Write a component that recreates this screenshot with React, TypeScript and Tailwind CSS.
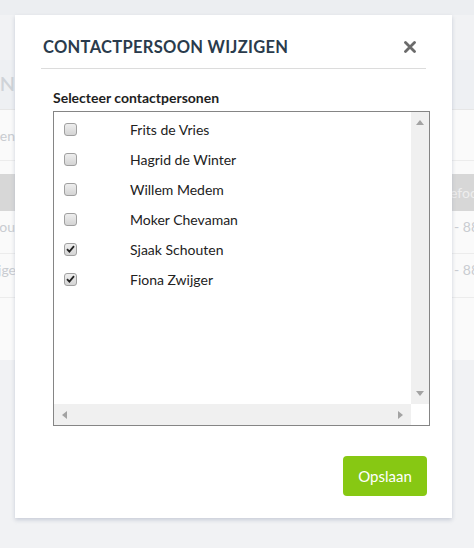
import React from "react";

const people = [
  { name: "Frits de Vries", checked: false },
  { name: "Hagrid de Winter", checked: false },
  { name: "Willem Medem", checked: false },
  { name: "Moker Chevaman", checked: false },
  { name: "Sjaak Schouten", checked: true },
  { name: "Fiona Zwijger", checked: true },
];

function Checkbox({ checked }: { checked: boolean }) {
  return (
    <div className="w-[13px] h-[13px] rounded-[3px] border border-[#a0a0a0] bg-gradient-to-b from-[#eeeeee] to-[#d4d4d4] flex items-center justify-center">
      {checked && (
        <svg width="9" height="8" viewBox="0 0 9 8">
          <path d="M1 4.2 L3.4 6.6 L8 1.2" fill="none" stroke="#222" strokeWidth="1.8" />
        </svg>
      )}
    </div>
  );
}

function Background() {
  return (
    <div className="w-[474px] h-[548px] bg-[#f1f2f4] pt-[60px] text-[#c9ccd1]" style={{ fontFamily: "Lato, 'Open Sans', sans-serif" }}>
      <div className="bg-[#fafafa] h-[300px]">
        <div className="h-[50px] bg-[#eef0f3] flex items-start pt-[8px] border-b border-[#e6e6e6]">
          <div className="w-[15px] overflow-hidden flex justify-end">
            <span className="whitespace-nowrap text-[20px] font-semibold text-[#cfd3d8]">WIJZIGEN</span>
          </div>
        </div>
        <div className="h-[51px] flex items-center border-b border-[#ececec]">
          <div className="w-[15px] overflow-hidden flex justify-end">
            <span className="whitespace-nowrap text-[14px]">Contactpersonen</span>
          </div>
        </div>
        <div className="h-[13px]" />
        <div className="h-[37px] bg-[#d7d7d7] flex items-center justify-between text-[#eeeeee] text-[14px]">
          <span />
          <div className="w-[24px] overflow-hidden">
            <span className="whitespace-nowrap">efoon</span>
          </div>
        </div>
        <div className="h-[43px] flex items-center justify-between border-b border-[#ececec] text-[14px] pb-[12px]">
          <div className="w-[15px] overflow-hidden flex justify-end">
            <span className="whitespace-nowrap">Schou</span>
          </div>
          <div className="w-[20px] overflow-hidden">
            <span className="whitespace-nowrap">- 88</span>
          </div>
        </div>
        <div className="h-[44px] flex items-center justify-between border-b border-[#ececec] text-[14px] pb-[12px]">
          <div className="w-[16px] overflow-hidden flex justify-end">
            <span className="whitespace-nowrap">Zwijge</span>
          </div>
          <div className="w-[20px] overflow-hidden">
            <span className="whitespace-nowrap">- 88</span>
          </div>
        </div>
      </div>
    </div>
  );
}

export default function App() {
  return (
    <div className="relative w-[474px] h-[548px] overflow-hidden">
      <div className="absolute inset-x-0 top-0 h-[15px] bg-[#eceef1]" />
      <Background />
      <div
        className="absolute left-[15px] top-[15px] w-[437px] h-[503px] bg-white shadow-[0_2px_4px_rgba(150,160,180,0.45)] flex flex-col"
        style={{ fontFamily: "Lato, 'Open Sans', sans-serif" }}
      >
        <div className="mx-[26px] pt-[20px] pb-[9px] border-b border-[#dcdcdc] flex items-center justify-between">
          <h2 className="ml-[2px] text-[16.5px] leading-[24px] font-bold tracking-[0.3px] text-[#2a3b4c]">
            CONTACTPERSOON WIJZIGEN
          </h2>
          <svg width="12" height="12" viewBox="0 0 12 12" className="mr-[10px]">
            <path d="M1.5 1.5 L10.5 10.5 M10.5 1.5 L1.5 10.5" stroke="#6b6b6b" strokeWidth="2.8" strokeLinecap="round" />
          </svg>
        </div>
        <div className="pl-[38px] pr-[22px] pt-[19px] flex flex-col">
          <label className="text-[14px] leading-[20px] font-bold text-[#1e1e1e]">Selecteer contactpersonen</label>
          <div className="mt-[3px] h-[315px] border border-[#858585] flex flex-col">
            <div className="flex-1 flex">
              <div className="flex-1 pt-[2px]">
                {people.map((p) => (
                  <div key={p.name} className="h-[30px] flex items-center pl-[10px]">
                    <Checkbox checked={p.checked} />
                    <span className="ml-[53px] text-[14px] text-[#222]">{p.name}</span>
                  </div>
                ))}
              </div>
              <div className="w-[18px] bg-[#f0f0f0] flex flex-col justify-between items-center py-[8px]">
                <svg width="8" height="5" viewBox="0 0 8 5">
                  <path d="M0 5 L4 0 L8 5 Z" fill="#a3a3a3" />
                </svg>
                <svg width="8" height="5" viewBox="0 0 8 5">
                  <path d="M0 0 L4 5 L8 0 Z" fill="#a3a3a3" />
                </svg>
              </div>
            </div>
            <div className="h-[21px] flex">
              <div className="flex-1 bg-[#f0f0f0] flex items-center justify-between px-[8px]">
                <svg width="5" height="8" viewBox="0 0 5 8">
                  <path d="M5 0 L0 4 L5 8 Z" fill="#a3a3a3" />
                </svg>
                <svg width="5" height="8" viewBox="0 0 5 8">
                  <path d="M0 0 L5 4 L0 8 Z" fill="#a3a3a3" />
                </svg>
              </div>
              <div className="w-[18px] bg-white" />
            </div>
          </div>
          <div className="flex justify-end mt-[30px] pr-[3px]">
            <button className="w-[84px] h-[40px] rounded-[4px] bg-[#87c813] text-white text-[15px]">Opslaan</button>
          </div>
        </div>
      </div>
    </div>
  );
}
